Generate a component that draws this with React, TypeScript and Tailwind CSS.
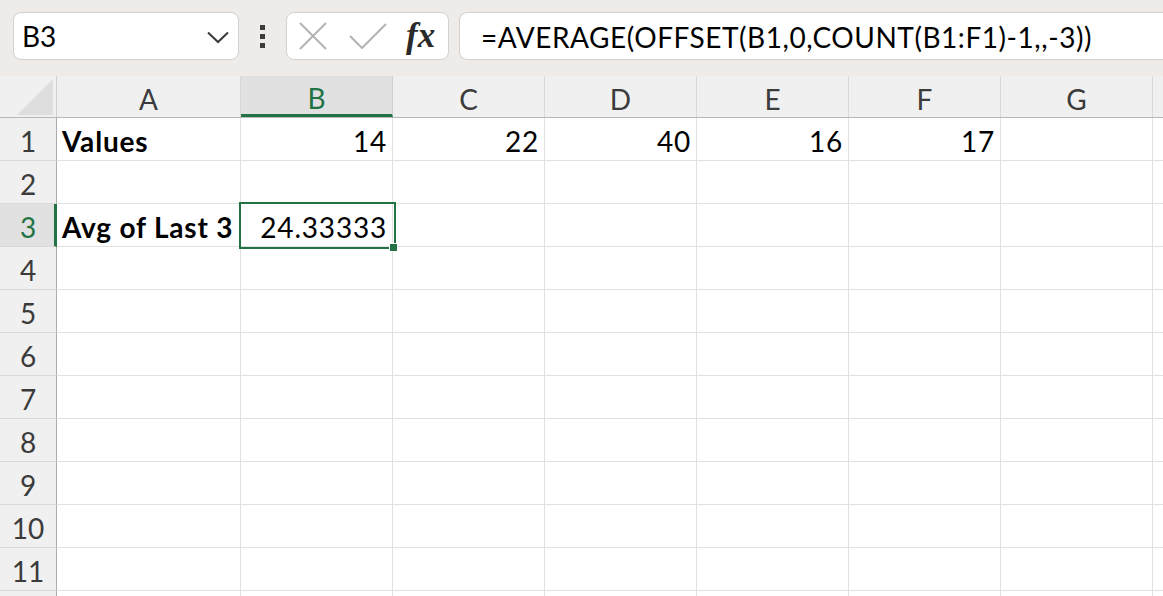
import React from "react";

const cols = [
  { l: "A", w: 184 },
  { l: "B", w: 152 },
  { l: "C", w: 152 },
  { l: "D", w: 152 },
  { l: "E", w: 152 },
  { l: "F", w: 152 },
  { l: "G", w: 152 },
];

type Cell = { t: string; bold?: boolean; right?: boolean };
const data: Record<number, Record<number, Cell>> = {
  1: {
    0: { t: "Values", bold: true },
    1: { t: "14", right: true },
    2: { t: "22", right: true },
    3: { t: "40", right: true },
    4: { t: "16", right: true },
    5: { t: "17", right: true },
  },
  3: {
    0: { t: "Avg of Last 3", bold: true },
    1: { t: "24.33333", right: true },
  },
};

const font = { fontFamily: "Lato, 'Open Sans', sans-serif" };

export default function App() {
  const rows = Array.from({ length: 12 }, (_, i) => i + 1);
  return (
    <div className="relative w-[1163px] h-[596px] overflow-hidden bg-white" style={font}>
      {/* Formula bar */}
      <div className="h-[76px] bg-[#efebe9] flex items-start pt-[12px] pl-[13px]">
        <div className="w-[226px] h-[48px] bg-white rounded-[8px] border border-[#d4d1cf] flex items-center pl-[8px] pr-[9px] justify-between">
          <span className="text-[28px] text-black leading-none">B3</span>
          <svg width="22" height="13" viewBox="0 0 22 13" className="mt-[2px]">
            <path d="M1 1.5 L11 11 L21 1.5" fill="none" stroke="#3a3a3a" strokeWidth="2" />
          </svg>
        </div>
        <div className="w-[47px] h-[48px] flex flex-col items-center justify-center gap-[4px]">
          <div className="w-[5px] h-[5px] bg-[#3c3c3c]" />
          <div className="w-[5px] h-[5px] bg-[#3c3c3c]" />
          <div className="w-[5px] h-[5px] bg-[#3c3c3c]" />
        </div>
        <div className="w-[163px] h-[48px] bg-white rounded-[8px] border border-[#d4d1cf] flex items-center pl-[12px]">
          <svg width="28" height="28" viewBox="0 0 28 28">
            <path d="M1 1 L27 27 M27 1 L1 27" stroke="#b3b3b3" strokeWidth="2" fill="none" />
          </svg>
          <svg width="38" height="26" viewBox="0 0 38 26" className="ml-[22px]">
            <path d="M1 13 L13 25 L37 1" stroke="#b3b3b3" strokeWidth="2" fill="none" />
          </svg>
          <span
            className="ml-[19px] text-[35px] italic font-bold leading-none text-[#2a2a2a] -mt-[2px]"
            style={{ fontFamily: "'Liberation Serif', 'DejaVu Serif', serif" }}
          >
            fx
          </span>
        </div>
        <div className="ml-[10px] flex-1 h-[48px] bg-white rounded-l-[8px] border border-r-0 border-[#d4d1cf] flex items-center pl-[21px] pt-[2px]">
          <span className="text-[28px] text-black leading-none tracking-[0.55px]">
            =AVERAGE(OFFSET(B1,0,COUNT(B1:F1)-1,,-3))
          </span>
        </div>
      </div>

      {/* Column headers */}
      <div className="flex h-[42px] bg-[#f0f0f0] border-b border-[#b8b8b8]">
        <div className="w-[57px] h-full border-r border-[#d0d0d0] flex items-end justify-end pr-[3px] pb-[2px]">
          <svg width="36" height="36" viewBox="0 0 36 36">
            <path d="M36 0 L36 36 L0 36 Z" fill="#dedede" />
          </svg>
        </div>
        {cols.map((c, i) => (
          <div
            key={c.l}
            style={{ width: c.w }}
            className={
              i === 1
                ? "h-full bg-[#e1e1e1] border-r border-[#d0d0d0] border-b-[3px] border-b-[#217346] flex items-center justify-center text-[28px] text-[#217346] pt-[6px]"
                : "h-full border-r border-[#d8d8d8] flex items-center justify-center text-[28px] text-[#3b3b3b] pt-[4px]"
            }
          >
            {c.l}
          </div>
        ))}
        <div className="flex-1 h-full" />
      </div>

      {/* Rows */}
      {rows.map((r) => (
        <div key={r} className="flex h-[43px]">
          <div
            className={
              r === 3
                ? "w-[57px] h-full bg-[#e1e1e1] border-r-[3px] border-r-[#217346] border-b border-b-[#d8d8d8] flex items-center justify-center text-[28px] text-[#217346] pl-[2px] pt-[4px]"
                : "w-[57px] h-full bg-[#f0f0f0] border-r border-r-[#ababab] border-b border-b-[#d8d8d8] flex items-center justify-center text-[28px] text-[#3b3b3b] pt-[4px]"
            }
          >
            {r}
          </div>
          {cols.map((c, ci) => {
            const cell = data[r]?.[ci];
            return (
              <div
                key={c.l}
                style={{ width: c.w }}
                className={
                  "h-full border-r border-b border-[#e1e1e1] flex items-center pl-[5px] pr-[5px] pt-[4px] text-[28px] text-black whitespace-nowrap tracking-[0.8px] " +
                  (cell?.right ? "justify-end " : "justify-start ") +
                  (cell?.bold ? "font-bold" : "")
                }
              >
                {cell?.t}
              </div>
            );
          })}
          <div className="flex-1 h-full border-b border-[#e1e1e1]" />
        </div>
      ))}

      {/* Selected cell B3 */}
      <div className="absolute left-[239px] top-[202px] w-[157px] h-[47px] border-2 border-[#217346] pointer-events-none" />
      <div className="absolute left-[389px] top-[243px] w-[9px] h-[9px] bg-[#217346] border border-white pointer-events-none" />
    </div>
  );
}
